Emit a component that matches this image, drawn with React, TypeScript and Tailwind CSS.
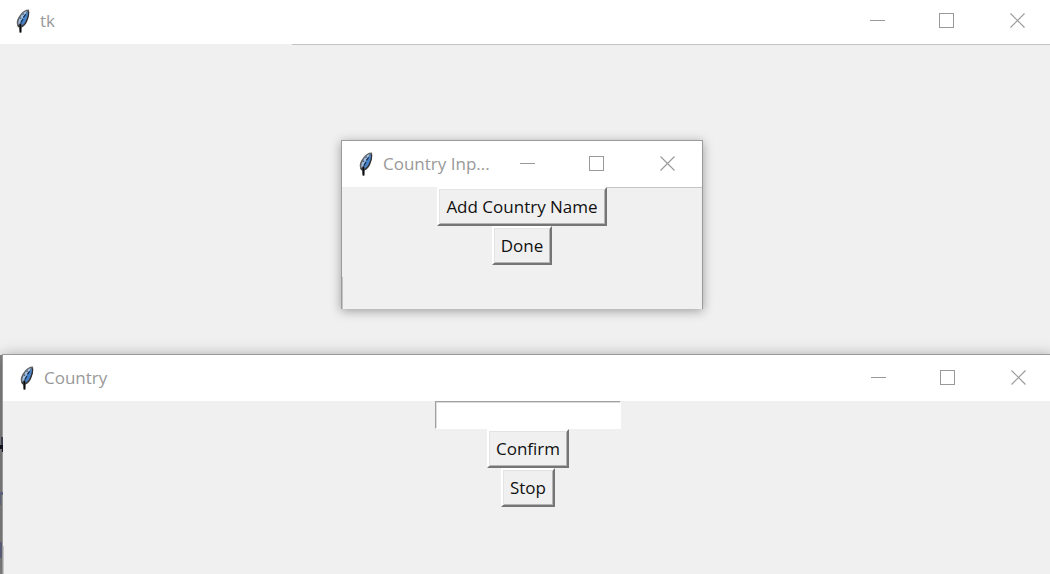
import { useId, type ReactNode } from "react";

function Feather() {
  return (
    <svg width="14" height="24" viewBox="0 0 14 24" aria-hidden="true" className="shrink-0">
      <path
        d="M13 0.5 C9.5 0.5 6 2.5 4 6 C1.5 9 0.5 12 0.8 14.5 L1.6 17.4 L3.2 19 L3.8 23.6 L5.2 23.6 L5.6 18.6 C8.5 17.4 10.6 14.8 11.6 11.5 C12.6 9 13.8 5 13 0.5 Z"
        fill="#5d5f63"
      />
      <path d="M11 2 C8 2.6 5.8 5 4.4 8 C2.8 10.6 2 13 2.4 15.6 L4.4 15 L8 8.5 Z" fill="#a3bfdc" />
      <path d="M11.8 2.2 L7.6 7.5 L4.6 12.5 L4.4 17 C7.4 15.8 9.4 13.4 10.2 10.6 C11.2 8.2 12.2 6 11.8 2.2 Z" fill="#4583cd" />
      <path d="M9.6 5.4 L7.4 8.4 M7 10 L4.8 13.8" fill="none" stroke="#182a44" strokeWidth="1.2" />
      <path d="M4.4 14.5 L4.5 23.4" fill="none" stroke="#0c0c0e" strokeWidth="1.8" />
      <path
        d="M12.6 2.5 C12.8 5.5 12 8.5 10.9 11 C9.9 14 8.3 16.2 5.6 17.6 M1.7 16 L3.6 18.2"
        fill="none"
        stroke="#26282d"
        strokeWidth="1"
      />
      <path d="M7.4 4.4 L6.8 6 M4.8 8.4 L4.6 10" stroke="#35506f" strokeWidth="1" />
    </svg>
  );
}

const captionButton = "flex h-full w-[70px] items-center justify-center";

function Caption({ title, id }: { title: string; id: string }) {
  return (
    <header className="flex h-[46px] items-center bg-white pb-px pl-[17px]">
      <Feather />
      <h1
        id={id}
        className="ml-2.5 min-w-0 flex-1 truncate font-['Open_Sans','Noto_Sans',sans-serif] text-[17px] leading-6 font-normal text-[#999999]"
      >
        {title}
      </h1>
      <div className="flex h-full shrink-0 text-[#999999]">
        <button type="button" aria-label="Minimize" className={captionButton}>
          <svg width="15" height="15" shapeRendering="crispEdges">
            <rect x="0" y="7" width="15" height="1" fill="currentColor" />
          </svg>
        </button>
        <button type="button" aria-label="Maximize" className={captionButton}>
          <svg width="16" height="15" shapeRendering="crispEdges">
            <rect x="0.5" y="0.5" width="14" height="14" fill="none" stroke="currentColor" />
          </svg>
        </button>
        <button type="button" aria-label="Close" className={captionButton}>
          <svg width="15" height="15">
            <path d="M0.5 0.5 L14.5 14.5 M14.5 0.5 L0.5 14.5" stroke="currentColor" strokeWidth="1.1" />
          </svg>
        </button>
      </div>
    </header>
  );
}

function TkWindow({
  title,
  className,
  edges,
  children,
}: {
  title: string;
  className: string;
  edges?: ReactNode;
  children?: ReactNode;
}) {
  const id = useId();
  return (
    <section
      aria-labelledby={id}
      className={`absolute flex flex-col border-x border-t border-[#9a9a9a] bg-[#f0f0f0] ${className}`}
    >
      <Caption title={title} id={id} />
      <div className="relative flex flex-1 flex-col items-center">
        {edges}
        {children}
      </div>
    </section>
  );
}

function TkButton({ children }: { children: string }) {
  return (
    <button
      type="button"
      className="relative h-[39px] border-2 border-t-white border-r-[#757575] border-b-[#757575] border-l-white bg-[#f0f0f0] px-[7px] font-['Open_Sans','Noto_Sans',sans-serif] text-[17px] leading-6 whitespace-nowrap text-[#111111] shadow-[inset_1px_1px_0_#e3e3e3,inset_-1px_-1px_0_#b4b4b4]"
    >
      {children}
    </button>
  );
}

export default function App() {
  return (
    <main className="relative h-screen overflow-hidden bg-[#f0f0f0]">
      <TkWindow
        title="tk"
        className="-top-[3px] -right-[3px] bottom-0 -left-0.5"
        edges={<span className="absolute top-0 right-0 left-[293px] h-px bg-[#c4c4c4]" />}
      />

      <TkWindow
        title="Country Inp..."
        className="top-[140px] left-[341px] h-[169px] w-[362px] shadow-[0_2px_10px_rgba(0,0,0,0.35)]"
        edges={
          <>
            <span className="absolute top-0 right-0 left-[192px] h-px bg-[#c4c4c4]" />
            <span className="absolute top-[90px] bottom-0 left-0 w-px bg-[#c4c4c4]" />
          </>
        }
      >
        <TkButton>Add Country Name</TkButton>
        <TkButton>Done</TkButton>
      </TkWindow>

      <div className="absolute top-[355px] bottom-0 left-0 w-0.5 bg-[#888888]" />

      <TkWindow
        title="Country"
        className="top-[354px] -right-1 bottom-0 left-0.5 shadow-[0_2px_14px_rgba(0,0,0,0.35)]"
        edges={<span className="absolute top-[145px] bottom-0 left-0 w-px bg-[#c4c4c4]" />}
      >
        <input
          type="text"
          aria-label="Country"
          className="h-7 w-[186px] border border-t-[#a0a0a0] border-r-white border-b-white border-l-[#a0a0a0] bg-white px-1 font-['Open_Sans','Noto_Sans',sans-serif] text-[17px] shadow-[inset_1px_1px_0_#dcdcdc] outline-none"
        />
        <TkButton>Confirm</TkButton>
        <TkButton>Stop</TkButton>
      </TkWindow>

      <svg
        aria-hidden="true"
        width="3"
        height="140"
        shapeRendering="crispEdges"
        className="absolute top-[430px] left-0"
      >
        <path d="M1 7h2v15h-1v-3h-2v-4h1z" fill="#11131f" />
        <path d="M1 7h2v8h-2z" fill="#3a3d4c" />
        <path d="M0 62h3v3h-2v10h-1z" fill="#5c607a" />
        <path d="M0 112h2v16h-2z" fill="#565a73" />
      </svg>
    </main>
  );
}
